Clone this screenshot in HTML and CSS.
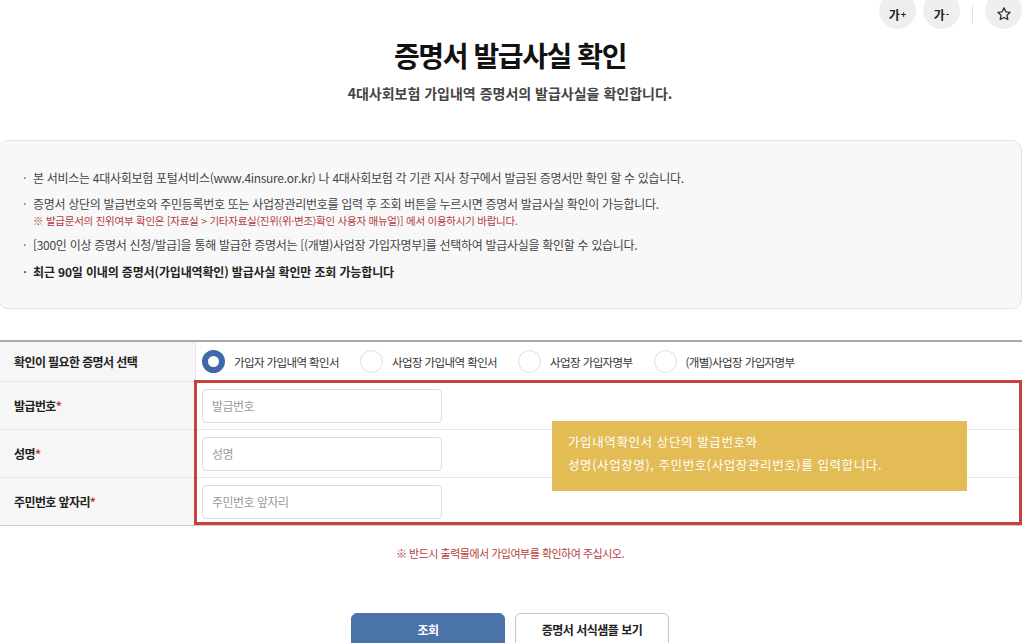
FILE: index.html
```html
<!DOCTYPE html>
<html lang="ko">
<head>
    <meta charset="UTF-8">
    <meta name="viewport" content="width=device-width, initial-scale=1.0">
    <title>증명서 발급사실 확인</title>
    <link rel="stylesheet" href="styles.css">
</head>
<body>
    <!-- 글자 크기 / 즐겨찾기 -->
    <div class="toolbar">
        <button class="tool-btn">가<sup>+</sup></button>
        <button class="tool-btn">가<sup>-</sup></button>
        <span class="tool-sep"></span>
        <button class="tool-btn">
            <svg width="16" height="16" viewBox="0 0 24 24" fill="none" stroke="#333" stroke-width="2" stroke-linejoin="round">
                <path d="M12 2.8l2.8 5.9 6.4.8-4.7 4.4 1.2 6.4L12 17.2l-5.7 3.1 1.2-6.4-4.7-4.4 6.4-.8z"/>
            </svg>
        </button>
    </div>

    <div class="page">
        <h1 class="title">증명서 발급사실 확인</h1>
        <p class="subtitle">4대사회보험 가입내역 증명서의 발급사실을 확인합니다.</p>

        <div class="info-box">
            <ul class="info-list">
                <li>본 서비스는 4대사회보험 포털서비스(www.4insure.or.kr) 나 4대사회보험 각 기관 지사 창구에서 발급된 증명서만 확인 할 수 있습니다.</li>
                <li>증명서 상단의 발급번호와 주민등록번호 또는 사업장관리번호를 입력 후 조회 버튼을 누르시면 증명서 발급사실 확인이 가능합니다.
                    <p class="info-note">※ 발급문서의 진위여부 확인은 [자료실 &gt; 기타자료실(진위(위·변조)확인 사용자 매뉴얼)] 에서 이용하시기 바랍니다.</p>
                </li>
                <li>[300인 이상 증명서 신청/발급]을 통해 발급한 증명서는 [(개별)사업장 가입자명부]를 선택하여 발급사실을 확인할 수 있습니다.</li>
                <li class="strong">최근 90일 이내의 증명서(가입내역확인) 발급사실 확인만 조회 가능합니다</li>
            </ul>
        </div>

        <div class="form-table">
            <div class="row row-select">
                <div class="label">확인이 필요한 증명서 선택</div>
                <div class="field radios">
                    <label class="radio"><span class="radio-dot checked"></span>가입자 가입내역 확인서</label>
                    <label class="radio"><span class="radio-dot"></span>사업장 가입내역 확인서</label>
                    <label class="radio"><span class="radio-dot"></span>사업장 가입자명부</label>
                    <label class="radio"><span class="radio-dot"></span>(개별)사업장 가입자명부</label>
                </div>
            </div>
            <div class="input-group">
                <div class="row">
                    <div class="label">발급번호<em>*</em></div>
                    <div class="field"><input class="text-input" type="text" placeholder="발급번호"></div>
                </div>
                <div class="row">
                    <div class="label">성명<em>*</em></div>
                    <div class="field"><input class="text-input" type="text" placeholder="성명"></div>
                </div>
                <div class="row">
                    <div class="label">주민번호 앞자리<em>*</em></div>
                    <div class="field"><input class="text-input" type="text" placeholder="주민번호 앞자리"></div>
                </div>

                <!-- 안내 강조 표시 -->
                <div class="highlight"></div>
                <div class="tip">
                    가입내역확인서 상단의 발급번호와<br>
                    성명(사업장명), 주민번호(사업장관리번호)를 입력합니다.
                </div>
            </div>
        </div>

        <p class="warn">※ 반드시 출력물에서 가입여부를 확인하여 주십시오.</p>

        <div class="actions">
            <button class="btn btn-primary">조회</button>
            <button class="btn btn-line">증명서 서식샘플 보기</button>
        </div>
    </div>
</body>
</html>
```

FILE: styles.css
```css
body {
    margin: 0;
    font-family: 'Noto Sans CJK KR', 'Noto Sans', sans-serif;
    color: #333;
    background-color: #fff;
    overflow: hidden;
}

/* 상단 도구 */
.toolbar {
    display: flex;
    justify-content: flex-end;
    align-items: center;
    gap: 7px;
    height: 36px;
    margin-top: -8px;
    padding-right: 3px;
}
.tool-btn {
    width: 37px;
    height: 37px;
    border: none;
    border-radius: 50%;
    background-color: #efefef;
    font-family: inherit;
    font-size: 12px;
    font-weight: 700;
    color: #222;
    padding: 8px 0 0;
    display: flex;
    justify-content: center;
    align-items: center;
}
.tool-btn sup {
    font-size: 9px;
    margin-left: 1px;
    line-height: 1;
}
.tool-sep {
    width: 1px;
    height: 18px;
    margin: 8px 5px 0;
    background-color: #e0e0e0;
}

.page {
    width: 1024px;
    margin-left: -2px;
}

.title {
    margin: 9px 0 0;
    text-align: center;
    font-size: 28px;
    line-height: 36px;
    font-weight: 700;
    letter-spacing: -1.4px;
    color: #111;
}
.subtitle {
    margin: 10px 0 0;
    text-align: center;
    font-size: 14px;
    line-height: 20px;
    font-weight: 700;
    letter-spacing: 0;
    color: #444;
}

/* 안내 박스 */
.info-box {
    margin-top: 37px;
    height: 169px;
    box-sizing: border-box;
    border: 1px solid #e4e4e4;
    border-radius: 10px;
    background-color: #f8f8f8;
    padding: 28px 0 0 24px;
}
.info-list {
    list-style: none;
    margin: 0;
    padding: 0;
}
.info-list li {
    position: relative;
    margin-top: 8px;
    padding-left: 10px;
    font-size: 12px;
    line-height: 18px;
    letter-spacing: -0.3px;
    color: #444;
}
.info-list li:first-child {
    margin-top: 0;
}
.info-list li::before {
    content: '·';
    position: absolute;
    left: 0;
    color: #666;
}
.info-list li.strong {
    margin-top: 9px;
    font-weight: 700;
    letter-spacing: -0.15px;
    color: #222;
}
.info-note {
    margin: 0;
    font-size: 10.5px;
    line-height: 15px;
    letter-spacing: -0.25px;
    color: #b23b3b;
}

/* 입력 표 */
.form-table {
    margin-top: 31px;
    width: 1024px;
    border-top: 2px solid #aaa;
    border-bottom: 1px solid #ccc;
}
.row {
    display: grid;
    grid-template-columns: 198px 1fr;
    height: 48px;
    box-sizing: border-box;
    border-top: 1px solid #e6e6e6;
}
.row-select {
    height: 39px;
    border-top: none;
}
.label {
    display: flex;
    align-items: center;
    padding-left: 16px;
    background-color: #f6f6f6;
    border-right: 1px solid #e6e6e6;
    font-size: 12px;
    font-weight: 700;
    letter-spacing: -0.6px;
    color: #222;
}
.label em {
    font-style: normal;
    color: #c0392b;
}
.field {
    display: flex;
    align-items: center;
    padding-left: 6px;
}
.radio {
    display: flex;
    align-items: center;
    margin-right: 21px;
    font-size: 11.5px;
    letter-spacing: -0.6px;
    color: #333;
}
.radio-dot {
    width: 21px;
    height: 21px;
    margin-right: 9px;
    border: 1px solid #ddd;
    border-radius: 50%;
    background-color: #fff;
    box-sizing: content-box;
}
.radio-dot.checked {
    width: 11px;
    height: 11px;
    border: 6px solid #3f6aa7;
}
.text-input {
    width: 240px;
    height: 34px;
    box-sizing: border-box;
    border: 1px solid #ddd;
    border-radius: 4px;
    padding: 0 9px;
    font-family: inherit;
    font-size: 12px;
    letter-spacing: -0.5px;
    background-color: #fff;
}
.text-input::placeholder {
    color: #9a9a9a;
}

.input-group {
    position: relative;
}
.highlight {
    position: absolute;
    left: 196px;
    top: -1px;
    width: 828px;
    height: 145px;
    box-sizing: border-box;
    border: 3px solid #c9413d;
    pointer-events: none;
}
.tip {
    position: absolute;
    left: 554px;
    top: 40px;
    width: 415px;
    height: 70px;
    box-sizing: border-box;
    padding: 9px 16px 0;
    background-color: #e3bc55;
    color: #fff;
    font-size: 12.5px;
    line-height: 23px;
    letter-spacing: 0.6px;
}

.warn {
    margin: 18px 0 0;
    text-align: center;
    font-size: 11px;
    line-height: 18px;
    letter-spacing: -0.5px;
    color: #b5403e;
}

.actions {
    display: flex;
    justify-content: center;
    gap: 10px;
    margin-top: 51px;
}
.btn {
    width: 154px;
    height: 40px;
    border-radius: 6px;
    font-family: inherit;
    font-size: 12px;
    font-weight: 700;
    letter-spacing: -0.5px;
    padding: 0 0 8px;
}
.btn-primary {
    border: 1px solid #4a73aa;
    background-color: #4a73aa;
    color: #fff;
}
.btn-line {
    border: 1px solid #c8c8c8;
    background-color: #fff;
    color: #222;
}
```
